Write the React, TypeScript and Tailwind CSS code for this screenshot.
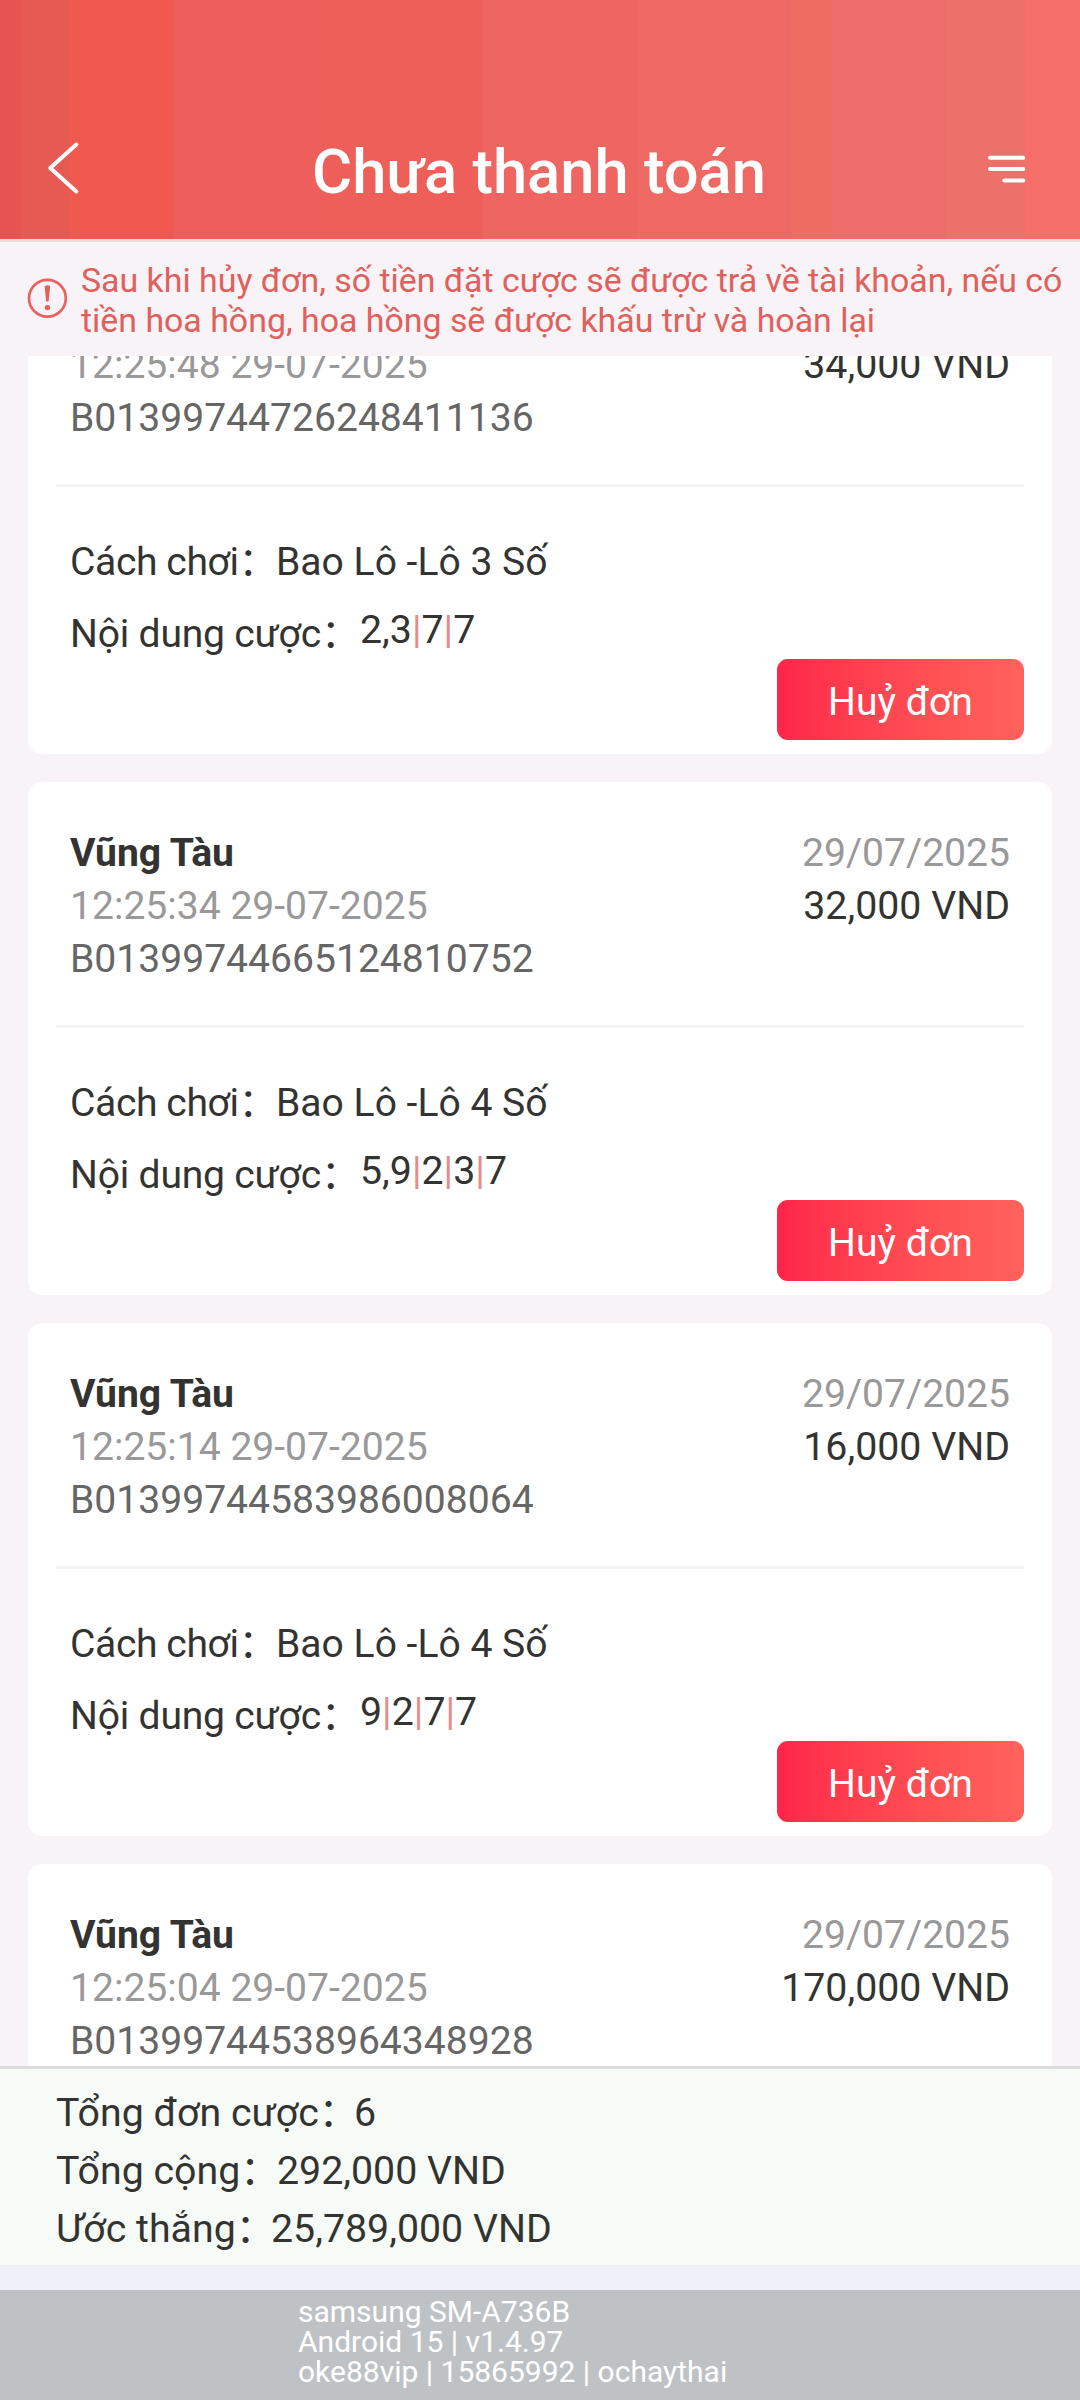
import { Fragment } from "react";

type Bet = {
  region: string;
  time: string;
  date: string;
  amount: string;
  code: string;
  play: string;
  numbers: string[];
};

const bets: Bet[] = [
  { region: "Vũng Tàu", time: "12:25:48 29-07-2025", date: "29/07/2025", amount: "34,000 VND", code: "B01399744726248411136", play: "Bao Lô -Lô 3 Số", numbers: ["2,3", "7", "7"] },
  { region: "Vũng Tàu", time: "12:25:34 29-07-2025", date: "29/07/2025", amount: "32,000 VND", code: "B01399744665124810752", play: "Bao Lô -Lô 4 Số", numbers: ["5,9", "2", "3", "7"] },
  { region: "Vũng Tàu", time: "12:25:14 29-07-2025", date: "29/07/2025", amount: "16,000 VND", code: "B01399744583986008064", play: "Bao Lô -Lô 4 Số", numbers: ["9", "2", "7", "7"] },
  { region: "Vũng Tàu", time: "12:25:04 29-07-2025", date: "29/07/2025", amount: "170,000 VND", code: "B01399744538964348928", play: "", numbers: [] },
];

function Header() {
  return (
    <header className="flex h-[242px] shrink-0 items-center justify-between border-b-[3px] border-[#ecdbdf] bg-[linear-gradient(90deg,#e55451_21px,#e75a53_21px_70px,#f15850_70px_174px,#ee5f5b_174px_325px,#ee5f59_325px_483px,#ef6562_483px_638px,#ee6963_638px_791px,#ef6c62_791px_831px,#ee6d6b_831px_946px,#ee706a_946px_1025px,#f76f69_1025px)] pt-[105px] pr-[53px] pl-[46px] text-white">
      <button className="-mt-[9px]" aria-label="Back">
        <svg width="36" height="54" viewBox="0 0 36 54" fill="none" stroke="currentColor" strokeWidth="4" strokeLinecap="round" strokeLinejoin="round">
          <path d="M30.3 3.6 L4.2 27 L30.3 50.4" />
        </svg>
      </button>
      <h1 className="ml-[9px] text-[61.5px] leading-[62px] font-medium">Chưa thanh toán</h1>
      <button className="-mt-[7px]" aria-label="Menu">
        <svg width="40" height="30" viewBox="0 0 40 30" fill="none" stroke="currentColor" strokeWidth="4" strokeLinecap="round">
          <path d="M3 3.8 H36.3 M3 15.1 H36.3 M17.3 26.4 H36.3" />
        </svg>
      </button>
    </header>
  );
}

function Notice() {
  return (
    <div className="flex h-[114px] shrink-0 items-start pl-[27px] text-[#e0605c]">
      <svg className="mt-[36px] shrink-0" width="41" height="41" viewBox="0 0 41 41" fill="none">
        <circle cx="20.4" cy="20.2" r="18.4" stroke="#ea625d" strokeWidth="2.7" />
        <path d="M17.7 9.2 Q17.6 7.2 20.4 7.2 Q23.2 7.2 23.1 9.2 L21.6 23.6 H19.2 Z" fill="#e0605c" />
        <circle cx="20.4" cy="29.6" r="2.7" fill="#e0605c" />
      </svg>
      <p className="mt-[19px] ml-[13px] text-[33.88px] leading-[39.7px] whitespace-nowrap">
        Sau khi hủy đơn, số tiền đặt cược sẽ được trả về tài khoản, nếu có
        <br />
        tiền hoa hồng, hoa hồng sẽ được khấu trừ và hoàn lại
      </p>
    </div>
  );
}

function BetCard({ bet }: { bet: Bet }) {
  return (
    <article className="flex h-[513px] shrink-0 flex-col rounded-[14px] bg-white px-[28px] pt-[45px] pb-[14px] text-[39.1px] text-[#333432]">
      <div className="grid grid-cols-[1fr_auto] px-[14px] leading-[53px]">
        <span className="font-bold">{bet.region}</span>
        <span className="text-right text-[#999]">{bet.date}</span>
        <span className="text-[#999]">{bet.time}</span>
        <span className="text-right text-[39.3px]">{bet.amount}</span>
        <span className="text-[#666]">{bet.code}</span>
      </div>
      <div className="mt-[39px] h-[3px] shrink-0 bg-[#f6f3f6]" />
      <div className="mt-[39px] h-[132px] px-[14px] leading-[72px]">
        <div className="flex">
          <span className="w-[206px] tracking-[-0.4px] whitespace-nowrap">Cách chơi：</span>
          <span>{bet.play}</span>
        </div>
        <div className="flex">
          <span className="w-[290px] tracking-[-0.2px] whitespace-nowrap">Nội dung cược：</span>
          <span className="-mt-[4px] text-[39.3px]">
            {bet.numbers.map((n, i) => (
              <Fragment key={i}>
                {i > 0 && <span className="text-[#e58c8c]">|</span>}
                {n}
              </Fragment>
            ))}
          </span>
        </div>
      </div>
      <button className="mt-auto h-[81px] w-[247px] shrink-0 self-end rounded-[11px] bg-linear-to-r from-[#ff2449] to-[#ff625b] pt-[6px] text-white">
        Huỷ đơn
      </button>
    </article>
  );
}

function Summary() {
  return (
    <section className="h-[199px] shrink-0 border-t-[3px] border-[#dcdcdc] bg-[#f7fbf7] pt-[15px] pl-[56px] text-[39.3px] leading-[58px] text-[#333432]">
      <div className="flex">
        <span className="w-[298px] whitespace-nowrap">Tổng đơn cược：</span>
        <span>6</span>
      </div>
      <div className="flex">
        <span className="w-[221px] whitespace-nowrap">Tổng cộng：</span>
        <span>292,000 VND</span>
      </div>
      <div className="flex">
        <span className="w-[215px] whitespace-nowrap">Ước thắng：</span>
        <span>25,789,000 VND</span>
      </div>
    </section>
  );
}

export default function App() {
  return (
    <div className="flex h-[2400px] w-[1080px] flex-col overflow-hidden bg-[#f7f3f7] font-[Roboto,'Noto_Sans_CJK_SC',sans-serif]">
      <Header />
      <Notice />
      <main className="h-[1710px] shrink-0 overflow-hidden px-[28px]">
        <div className="-mt-[115px] flex flex-col gap-[28px]">
          {bets.map((bet) => (
            <BetCard key={bet.code} bet={bet} />
          ))}
        </div>
      </main>
      <Summary />
      <div className="h-[25px] shrink-0 bg-[#eef1f7]" />
      <footer className="grow bg-[#bfc2c5] pt-[7px] pl-[298px] text-[30px] leading-[30px] text-white">
        <p>samsung SM-A736B</p>
        <p>Android 15 | v1.4.97</p>
        <p>oke88vip | 15865992 | ochaythai</p>
      </footer>
    </div>
  );
}
